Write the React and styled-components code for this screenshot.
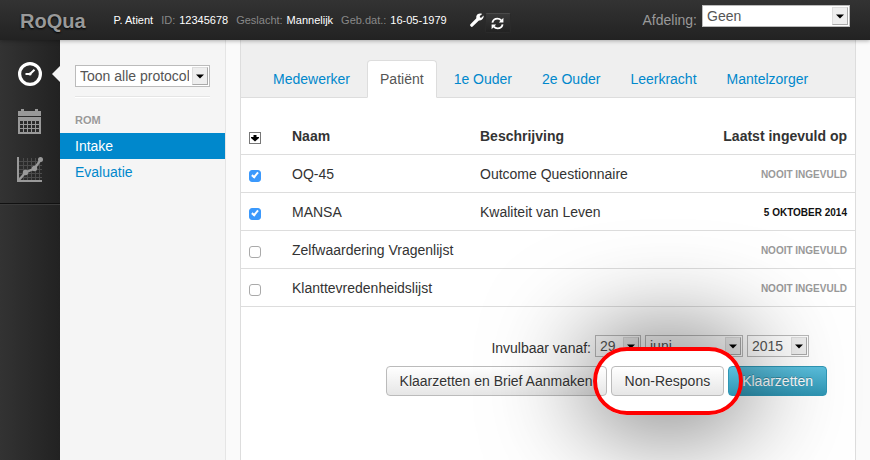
import React, { useState } from "react";
import styled, { createGlobalStyle, css } from "styled-components";

const GlobalStyle = createGlobalStyle`
  *, *::before, *::after { box-sizing: border-box; }
  body {
    margin: 0;
    background: #fafafa;
    color: #333;
    font: 14px/20px "Liberation Sans", Arial, sans-serif;
  }
  button, select { font: inherit; }
`;

const Page = styled.div`
  min-height: 100vh;
  display: flex;
  flex-direction: column;
  overflow: hidden;
`;

const Header = styled.header`
  position: relative;
  z-index: 1;
  display: flex;
  align-items: center;
  height: 40px;
  padding: 0 20px;
  background: linear-gradient(#333, #222);
  box-shadow: 0 1px 4px rgba(0, 0, 0, 0.3);
  color: #999;
`;

const Brand = styled.a`
  margin-right: 28px;
  font-size: 20px;
  font-weight: bold;
  line-height: 24px;
  padding-top: 2px;
  color: #999;
  text-decoration: none;
  text-shadow: 0 1px 2px #000;
`;

const PatientInfo = styled.dl`
  display: flex;
  gap: 8px;
  margin: 0;
  font-size: 11px;
`;

const Fact = styled.div`
  display: flex;
  gap: 4px;
`;

const Term = styled.dt`
  color: #888;
`;

const Value = styled.dd`
  margin: 0;
  color: #fff;
`;

const HeaderTools = styled.div`
  display: flex;
  align-items: center;
  margin-left: 22px;
`;

const ToolButton = styled.button`
  display: flex;
  align-items: center;
  justify-content: center;
  width: 16px;
  height: 20px;
  padding: 0;
  border: 0;
  color: #fff;
  background: none;
  ${(p) =>
    p.$raised &&
    css`
      width: 26px;
      margin-top: 6px;
      border: 1px solid #2a2a2a;
      border-top-color: #4a4a4a;
      border-radius: 2px;
      background: linear-gradient(#383838, #222);
    `}
`;

const Department = styled.div`
  display: flex;
  align-items: flex-start;
  gap: 5px;
  height: 30px;
  margin-left: auto;
`;

const DepartmentLabel = styled.label`
  padding-top: 5px;
`;

const SelectBox = styled.span`
  position: relative;
  display: block;
  width: ${(p) => p.$width};
`;

const NativeSelect = styled.select`
  appearance: none;
  display: block;
  width: 100%;
  height: 22px;
  padding: 0 20px 0 4px;
  border: 1px solid #bbb;
  border-radius: 0;
  color: #555;
  background: #fff;
  line-height: 20px;
`;

const SelectArrow = styled.span`
  position: absolute;
  top: 2px;
  right: 2px;
  display: flex;
  align-items: center;
  justify-content: center;
  width: 16px;
  height: 18px;
  border: 1px solid #ddd;
  border-right-color: #aaa;
  border-bottom-color: #aaa;
  background: #eee;
  pointer-events: none;
`;

const Body = styled.div`
  flex: 1;
  display: flex;
`;

const Rail = styled.nav`
  width: 60px;
  flex: none;
  background: linear-gradient(90deg, #333, #222);
`;

const RailList = styled.div`
  display: flex;
  flex-direction: column;
  height: 164px;
  padding-top: 10px;
  border-bottom: 1px solid #111;
  box-shadow: 0 1px 0 #3a3a3a;
`;

const RailLink = styled.a`
  position: relative;
  display: flex;
  align-items: center;
  justify-content: center;
  height: 48px;
  color: ${(p) => (p.$active ? "#fff" : "#999")};
  ${(p) =>
    p.$active &&
    css`
      &::after {
        content: "";
        position: absolute;
        right: 0;
        border: 8px solid transparent;
        border-left-width: 0;
        border-right-color: #f5f5f5;
      }
    `}
`;

const Sidebar = styled.aside`
  width: 166px;
  flex: none;
  padding-top: 25px;
  border-right: 1px solid #e5e5e5;
  background: #f5f5f5;
`;

const FilterArea = styled.div`
  margin: 0 15px;
  padding-bottom: 9px;
  border-bottom: 1px solid #e5e5e5;
  box-shadow: 0 1px 0 #fff;
`;

const GroupTitle = styled.h2`
  margin: 13px 0 3px;
  padding: 0 15px;
  font-size: 11px;
  line-height: 20px;
  color: #999;
  text-shadow: 0 1px 0 #fff;
`;

const ProtocolLink = styled.a`
  display: block;
  padding: 3px 15px;
  color: ${(p) => (p.$active ? "#fff" : "#08c")};
  background: ${(p) => (p.$active ? "#08c" : "transparent")};
  text-decoration: none;
`;

const Main = styled.main`
  flex: 1;
  min-width: 0;
  margin: 0 14px;
  border: solid #ddd;
  border-width: 0 1px;
  background: #fff;
`;

const Tabs = styled.nav`
  display: flex;
  gap: 4px;
  padding: 20px 19px 0;
  border-bottom: 1px solid #ddd;
  background: #efefef;
`;

const Tab = styled.a`
  margin-bottom: -1px;
  padding: 8px 12px;
  border: 1px solid ${(p) => (p.$active ? "#ddd" : "transparent")};
  border-bottom-color: ${(p) => (p.$active ? "#fff" : "transparent")};
  border-radius: 4px 4px 0 0;
  color: ${(p) => (p.$active ? "#555" : "#08c")};
  background: ${(p) => (p.$active ? "#fff" : "transparent")};
  text-decoration: none;
`;

const Table = styled.table`
  width: 100%;
  border-collapse: separate;
  border-spacing: 0;
  table-layout: fixed;
`;

const Col = styled.col`
  width: ${(p) => p.$width};
`;

const HeadCell = styled.th`
  height: 57px;
  padding: 20px 8px 0;
  border-bottom: 1px solid #ddd;
  text-align: ${(p) => (p.$end ? "right" : "left")};
  white-space: nowrap;
`;

const Cell = styled.td`
  height: 38px;
  padding: 0 8px;
  border-bottom: 1px solid #ddd;
  text-align: ${(p) => (p.$end ? "right" : "left")};
  white-space: nowrap;
`;

const ToggleAll = styled.button`
  display: flex;
  align-items: center;
  justify-content: center;
  width: 12px;
  height: 12px;
  margin-top: 4px;
  padding: 0;
  border: 1px solid #777;
  background: #fff;
`;

const Check = styled.input`
  appearance: none;
  display: block;
  width: 12px;
  height: 12px;
  margin: 5px 0 0;
  border: 1px solid #aaa;
  border-radius: 3px;
  background: #fff;

  &:checked {
    border-color: #3b99fc;
    background: #3b99fc;
  }

  &:checked::after {
    content: "";
    display: block;
    width: 4px;
    height: 7px;
    margin: 0 auto;
    border: solid #fff;
    border-width: 0 2px 2px 0;
    transform: rotate(40deg);
  }
`;

const Stamp = styled.span`
  font-size: 10px;
  font-weight: bold;
  text-transform: uppercase;
  color: ${(p) => (p.$filled ? "#111" : "#999")};
`;

const Form = styled.form`
  display: flex;
  flex-direction: column;
  align-items: flex-end;
  gap: 9px;
  padding: 28px 28px 0 0;
`;

const DateRow = styled.div`
  display: flex;
  gap: 4px;
  margin-right: 18px;
`;

const DateLabel = styled.label`
  padding-top: 4px;
  line-height: 18px;
`;

const Actions = styled.div`
  display: flex;
  gap: 4px;
`;

const Button = styled.button`
  position: relative;
  z-index: 2;
  height: 30px;
  padding: 0 13px;
  border: 1px solid ${(p) => (p.$primary ? "#2f96b4" : "#bbb")};
  border-radius: 4px;
  color: ${(p) => (p.$primary ? "#fff" : "#333")};
  background: ${(p) =>
    p.$primary ? "linear-gradient(#5bc0de, #2f96b4)" : "linear-gradient(#fff, #e6e6e6)"};
  text-shadow: ${(p) =>
    p.$primary ? "0 -1px 0 rgba(0, 0, 0, 0.25)" : "0 1px 0 rgba(255, 255, 255, 0.75)"};
  white-space: nowrap;
`;

const Highlight = styled.span`
  position: relative;
  display: flex;

  &::before,
  &::after {
    content: "";
    position: absolute;
    inset: -19px -19px -19px -18px;
    border-radius: 34px;
    pointer-events: none;
  }

  &::before {
    z-index: 1;
    background: #fff;
  }

  &::after {
    z-index: 3;
    border: 4px solid #f00;
    box-shadow: 0 0 100px 10px rgba(0, 0, 0, 0.6);
  }
`;

function Select({ options, width, ...rest }) {
  return (
    <SelectBox $width={width}>
      <NativeSelect {...rest}>
        {options.map((option) => (
          <option key={option}>{option}</option>
        ))}
      </NativeSelect>
      <SelectArrow>
        <svg width="8" height="5" viewBox="0 0 8 5" aria-hidden="true">
          <path d="M0 0.5h8L4 4.5z" fill="#000" />
        </svg>
      </SelectArrow>
    </SelectBox>
  );
}

const WrenchIcon = () => (
  <svg width="14" height="14" viewBox="0 0 14 14" aria-hidden="true">
    <path
      d="M1.8 12.2 8 6"
      stroke="currentColor"
      strokeWidth="3.2"
      strokeLinecap="round"
    />
    <path
      d="M12.2 1 9.8 3.1l.2 1.3 1.3.3L13.6 2.6C14 5.2 12.3 7.4 9.9 7.4 7.5 7.4 6 5.8 6.3 3.6 6.7 1.3 9.2-.2 12.2 1z"
      fill="currentColor"
    />
  </svg>
);

const RefreshIcon = () => (
  <svg width="13" height="13" viewBox="0 0 13 13" aria-hidden="true">
    <path
      d="M1.4 5.6C2 3 4 1.6 6.4 1.6c1.6 0 2.8.6 3.8 1.7M11.6 7.4C11 10 9 11.4 6.6 11.4c-1.6 0-2.8-.6-3.8-1.7"
      fill="none"
      stroke="currentColor"
      strokeWidth="1.9"
    />
    <path d="M12.4.8v4.6H7.8zM.6 12.2V7.6h4.6z" fill="currentColor" />
  </svg>
);

const GaugeIcon = () => (
  <svg width="24" height="24" viewBox="0 0 24 24" aria-hidden="true">
    <circle cx="12" cy="12" r="10.4" fill="none" stroke="currentColor" strokeWidth="3.2" />
    <path
      d="M7.500 12H12l4.500-4.200"
      fill="none"
      stroke="currentColor"
      strokeWidth="2"
      strokeLinejoin="round"
    />
    <circle cx="12" cy="12" r="1.600" fill="currentColor" />
  </svg>
);

const CalendarIcon = () => (
  <svg width="24" height="26" viewBox="0 0 24 26" aria-hidden="true">
    <path d="M0 2h3V0h3v2h11V0h3v2h3v5H0zM0 8h23v17H0z" fill="currentColor" />
    <path
      d="M2 12h3v3H2zM6 12h3v3H6zM10 12h3v3h-3zM14 12h3v3h-3zM18 12h3v3h-3zM2 16h3v3H2zM6 16h3v3H6zM10 16h3v3h-3zM14 16h3v3h-3zM18 16h3v3h-3zM2 20h3v3H2zM6 20h3v3H6zM10 20h3v3h-3zM14 20h3v3h-3zM18 20h3v3h-3z"
      fill="#2b2b2b"
    />
  </svg>
);

const ChartIcon = () => (
  <svg width="26" height="26" viewBox="0 0 26 26" aria-hidden="true">
    <path
      d="M6.5 1v22M10.5 1v22M14.5 1v22M18.5 1v22M22.5 1v22M2 4.5h23M2 8.5h23M2 12.5h23M2 16.5h23M2 20.5h23"
      stroke="#4c4c4c"
      strokeWidth="1"
    />
    <path d="M0 0h2v23h23v2H0z" fill="currentColor" />
    <path d="M2 23 8.500 15.500 17.500 11.500 23.500 3" fill="none" stroke="currentColor" strokeWidth="2.200" />
    <circle cx="8.500" cy="15.500" r="2.700" fill="currentColor" />
    <circle cx="17.500" cy="11.500" r="2.700" fill="currentColor" />
    <circle cx="23.500" cy="2.600" r="2.500" fill="currentColor" />
  </svg>
);

const ToggleIcon = () => (
  <svg width="8" height="8" viewBox="0 0 8 8" aria-hidden="true">
    <path d="M2.500 1h3v2H8v1L4 7.500 0 4V3h2.500z" fill="#000" />
  </svg>
);

const patientFacts = [
  ["ID:", "12345678"],
  ["Geslacht:", "Mannelijk"],
  ["Geb.dat.:", "16-05-1979"],
];

const tabs = ["Medewerker", "Patiënt", "1e Ouder", "2e Ouder", "Leerkracht", "Mantelzorger"];

const questionnaires = [
  { id: "oq45", name: "OQ-45", description: "Outcome Questionnaire", last: null },
  { id: "mansa", name: "MANSA", description: "Kwaliteit van Leven", last: "5 oktober 2014" },
  { id: "zelf", name: "Zelfwaardering Vragenlijst", description: "", last: null },
  { id: "klant", name: "Klanttevredenheidslijst", description: "", last: null },
];

export default function App() {
  const [selected, setSelected] = useState(["oq45", "mansa"]);

  const toggle = (id) =>
    setSelected((ids) => (ids.includes(id) ? ids.filter((x) => x !== id) : [...ids, id]));

  const toggleAll = () =>
    setSelected((ids) =>
      ids.length === questionnaires.length ? [] : questionnaires.map((q) => q.id)
    );

  return (
    <Page>
      <GlobalStyle />
      <Header>
        <Brand href="#">RoQua</Brand>
        <PatientInfo>
          <Fact>
            <Value>P. Atient</Value>
          </Fact>
          {patientFacts.map(([term, value]) => (
            <Fact key={term}>
              <Term>{term}</Term>
              <Value>{value}</Value>
            </Fact>
          ))}
        </PatientInfo>
        <HeaderTools>
          <ToolButton type="button" aria-label="Instellingen">
            <WrenchIcon />
          </ToolButton>
          <ToolButton type="button" aria-label="Vernieuwen" $raised>
            <RefreshIcon />
          </ToolButton>
        </HeaderTools>
        <Department>
          <DepartmentLabel htmlFor="department">Afdeling:</DepartmentLabel>
          <Select id="department" options={["Geen"]} width="148px" />
        </Department>
      </Header>
      <Body>
        <Rail>
          <RailList>
            <RailLink href="#dashboard" aria-label="Dashboard" $active>
              <GaugeIcon />
            </RailLink>
            <RailLink href="#agenda" aria-label="Agenda">
              <CalendarIcon />
            </RailLink>
            <RailLink href="#resultaten" aria-label="Resultaten">
              <ChartIcon />
            </RailLink>
          </RailList>
        </Rail>
        <Sidebar>
          <FilterArea>
            <Select
              aria-label="Protocollen"
              options={["Toon alle protocollen"]}
              width="100%"
            />
          </FilterArea>
          <GroupTitle>ROM</GroupTitle>
          <ProtocolLink href="#intake" $active>
            Intake
          </ProtocolLink>
          <ProtocolLink href="#evaluatie">Evaluatie</ProtocolLink>
        </Sidebar>
        <Main>
          <Tabs>
            {tabs.map((tab) => (
              <Tab key={tab} href="#tab" $active={tab === "Patiënt"}>
                {tab}
              </Tab>
            ))}
          </Tabs>
          <Table>
            <colgroup>
              <Col $width="43px" />
              <Col $width="188px" />
              <Col $width="auto" />
              <Col $width="160px" />
            </colgroup>
            <thead>
              <tr>
                <HeadCell>
                  <ToggleAll type="button" aria-label="Alles selecteren" onClick={toggleAll}>
                    <ToggleIcon />
                  </ToggleAll>
                </HeadCell>
                <HeadCell>Naam</HeadCell>
                <HeadCell>Beschrijving</HeadCell>
                <HeadCell $end>Laatst ingevuld op</HeadCell>
              </tr>
            </thead>
            <tbody>
              {questionnaires.map((q) => (
                <tr key={q.id}>
                  <Cell>
                    <Check
                      type="checkbox"
                      id={q.id}
                      checked={selected.includes(q.id)}
                      onChange={() => toggle(q.id)}
                    />
                  </Cell>
                  <Cell>
                    <label htmlFor={q.id}>{q.name}</label>
                  </Cell>
                  <Cell>{q.description}</Cell>
                  <Cell $end>
                    <Stamp $filled={Boolean(q.last)}>{q.last || "Nooit ingevuld"}</Stamp>
                  </Cell>
                </tr>
              ))}
            </tbody>
          </Table>
          <Form onSubmit={(event) => event.preventDefault()}>
            <DateRow>
              <DateLabel htmlFor="day">Invulbaar vanaf:</DateLabel>
              <Select id="day" options={["29"]} width="46px" />
              <Select aria-label="Maand" options={["juni"]} width="98px" />
              <Select aria-label="Jaar" options={["2015"]} width="62px" />
            </DateRow>
            <Actions>
              <Button type="submit">Klaarzetten en Brief Aanmaken</Button>
              <Highlight>
                <Button type="submit">Non-Respons</Button>
              </Highlight>
              <Button type="submit" $primary>
                Klaarzetten
              </Button>
            </Actions>
          </Form>
        </Main>
      </Body>
    </Page>
  );
}
